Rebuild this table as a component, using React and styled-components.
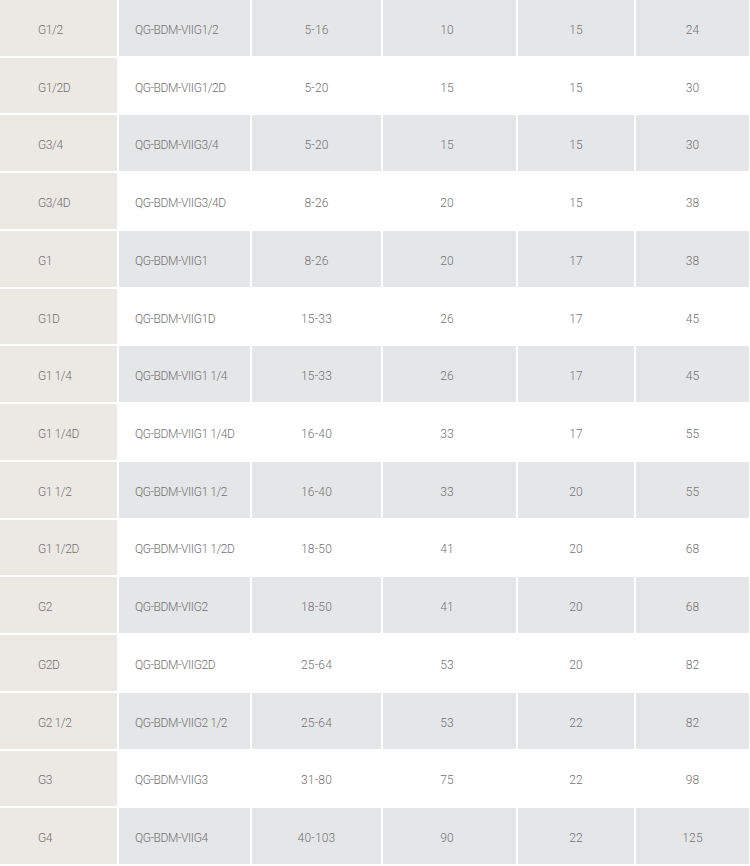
import React from "react";
import styled, { createGlobalStyle } from "styled-components";

const Global = createGlobalStyle`
  html, body { margin: 0; padding: 0; background: #ffffff; }
  body { font-family: "Roboto", "Liberation Sans", sans-serif; }
`;

const rows = [
  ["G1/2", "QG-BDM-VIIG1/2", "5-16", "10", "15", "24"],
  ["G1/2D", "QG-BDM-VIIG1/2D", "5-20", "15", "15", "30"],
  ["G3/4", "QG-BDM-VIIG3/4", "5-20", "15", "15", "30"],
  ["G3/4D", "QG-BDM-VIIG3/4D", "8-26", "20", "15", "38"],
  ["G1", "QG-BDM-VIIG1", "8-26", "20", "17", "38"],
  ["G1D", "QG-BDM-VIIG1D", "15-33", "26", "17", "45"],
  ["G1 1/4", "QG-BDM-VIIG1 1/4", "15-33", "26", "17", "45"],
  ["G1 1/4D", "QG-BDM-VIIG1 1/4D", "16-40", "33", "17", "55"],
  ["G1 1/2", "QG-BDM-VIIG1 1/2", "16-40", "33", "20", "55"],
  ["G1 1/2D", "QG-BDM-VIIG1 1/2D", "18-50", "41", "20", "68"],
  ["G2", "QG-BDM-VIIG2", "18-50", "41", "20", "68"],
  ["G2D", "QG-BDM-VIIG2D", "25-64", "53", "20", "82"],
  ["G2 1/2", "QG-BDM-VIIG2 1/2", "25-64", "53", "22", "82"],
  ["G3", "QG-BDM-VIIG3", "31-80", "75", "22", "98"],
  ["G4", "QG-BDM-VIIG4", "40-103", "90", "22", "125"],
];

const Table = styled.div`
  display: grid;
  grid-template-columns: 117px 131px 129px 133px 116px 113px;
  grid-template-rows: repeat(15, 1fr);
  column-gap: 2px;
  row-gap: 2px;
  height: 866px;
  width: 750px;
  box-sizing: border-box;
  padding-bottom: 2px;
  padding-right: 1px;
  background: #ffffff;
`;

const Cell = styled.div`
  display: flex;
  align-items: center;
  justify-content: ${(p) => (p.$align === "left" ? "flex-start" : "center")};
  padding: 4px ${(p) => p.$padR || 0}px 0 ${(p) => p.$pad || 0}px;
  box-sizing: border-box;
  background: ${(p) => (p.$head ? "#ece8e4" : p.$shaded ? "#e5e6e8" : "#ffffff")};
  color: #727272;
  font-size: 12px;
  font-weight: 300;
  letter-spacing: ${(p) => (p.$tight ? "-0.4px" : "0.2px")};
  white-space: nowrap;
`;

export default function App() {
  return (
    <>
      <Global />
      <Table>
        {rows.map((r, i) =>
          r.map((v, j) => (
            <Cell
              key={`${i}-${j}`}
              $head={j === 0}
              $shaded={i % 2 === 0}
              $align={j < 2 ? "left" : "center"}
              $tight={j < 2}
              $pad={j === 0 ? 38 : j === 1 ? 16 : 0}
              $padR={j === 3 ? 5 : 0}
            >
              {v}
            </Cell>
          ))
        )}
      </Table>
    </>
  );
}
